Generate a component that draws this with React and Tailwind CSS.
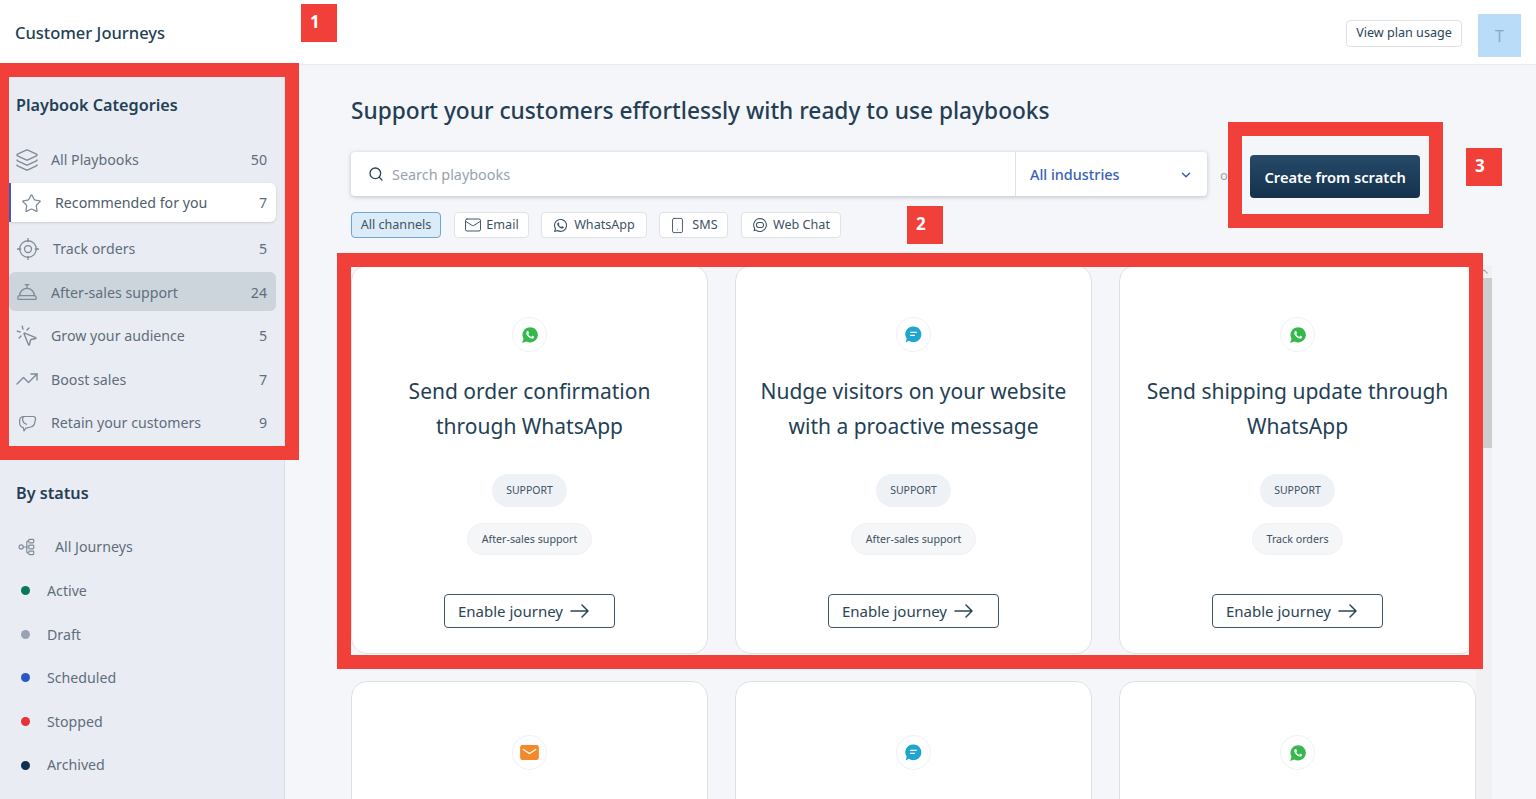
import React from 'react';
import { Layers, Star, ConciergeBell, MousePointerClick, TrendingUp, Search, ChevronDown, ChevronUp, Mail, Smartphone } from 'lucide-react';
import { IoLogoWhatsapp } from 'react-icons/io';
import { FaWhatsapp } from 'react-icons/fa';

const TargetIcon = (props) => (
  <svg viewBox="0 0 24 24" fill="none" stroke="currentColor" strokeWidth="1.5" {...props}>
    <circle cx="12" cy="12" r="9" />
    <circle cx="12" cy="12" r="3.8" />
    <path d="M12 0v4.500M12 19.500V24M0 12h4.500M19.500 12H24" />
  </svg>
);

const BubblesIcon = (props) => (
  <svg viewBox="0 0 24 24" fill="none" stroke="currentColor" strokeWidth="1.5" strokeLinejoin="round" {...props}>
    <path d="M8 4h10.500c2 0 3 1.200 2.600 3.200l-1 4.600c-.5 2.400-2 3.700-4.300 4.200l-5.600 1.200-2.200 3.300-.8-3.700C4.300 16 3 14 3 11.500V9c0-3 2-5 5-5z" />
    <path d="M8 4c-1.500 1-2 2.500-1.500 4.500.6 2.500 2.500 4 5 4.500" />
  </svg>
);

const FlowIcon = (props) => (
  <svg viewBox="0 0 20 20" fill="none" stroke="currentColor" strokeWidth="1.3" {...props}>
    <circle cx="3.500" cy="10" r="2.300" />
    <path d="M5.800 10h4M9.800 3.500v13M9.800 3.500h2M9.800 10h2M9.800 16.500h2" />
    <rect x="12" y="1.500" width="5.500" height="4" rx="1" />
    <rect x="12" y="8" width="5.500" height="4" rx="1" />
    <rect x="12" y="14.500" width="5.500" height="4" rx="1" />
  </svg>
);

const WebChatIcon = (props) => (
  <svg viewBox="0 0 20 20" fill="none" stroke="currentColor" strokeWidth="1.300" {...props}>
    <path d="M10 2a8 8 0 1 1-5 14.300L2.700 17l.6-2.800A8 8 0 0 1 10 2z" />
    <rect x="5.500" y="7" width="9" height="6" rx="3" />
  </svg>
);

const LongArrow = () => (
  <svg viewBox="0 0 19 14" fill="none" stroke="currentColor" strokeWidth="1.500" strokeLinecap="round" strokeLinejoin="round" className="w-[19px] h-[14px]">
    <path d="M1 7h17M12 1l6 6-6 6" />
  </svg>
);

const ChatBadge = () => (
  <svg viewBox="0 0 20 20" className="w-[19px] h-[19px]">
    <path d="M10 1.500a8.300 8.300 0 1 1-4.800 15.100L1.800 18.500l1-4A8.300 8.300 0 0 1 10 1.500z" fill="#1fa5cf" />
    <path d="M6.500 7.800h7M6.500 11h5" stroke="#fff" strokeWidth="1.400" />
  </svg>
);

const MailBadge = () => (
  <svg viewBox="0 0 20 16" className="w-[19px] h-[15px]">
    <rect width="20" height="16" rx="2.500" fill="#f28a2c" />
    <path d="M3 4.500l7 4.500 7-4.500" fill="none" stroke="#fff" strokeWidth="1.400" />
  </svg>
);

const WhatsappBadge = () => <IoLogoWhatsapp className="w-[18px] h-[18px] text-[#36b94c]" />;

const categories = [
  { label: 'All Playbooks', count: 50, Icon: Layers, row: 'pl-[6px]', icon: 'w-[24px] h-[24px]', text: 'ml-[12px]' },
  { label: 'Recommended for you', count: 7, Icon: Star, row: '-mt-[1px] pt-[2px] pl-[10px] bg-white rounded-r-md border-l-2 border-[#3a5fb8] shadow-sm', icon: 'w-[21px] h-[21px]', text: 'ml-[13px] text-[#4d5d6b]' },
  { label: 'Track orders', count: 5, Icon: TargetIcon, row: 'mt-[2px] pt-[2px] pl-[8px]', icon: 'w-[22px] h-[22px]', text: 'ml-[14px]' },
  { label: 'After-sales support', count: 24, Icon: ConciergeBell, row: 'pt-[2px] pl-[7px] bg-[#cdd5dc] rounded-md', icon: 'w-[22px] h-[22px]', text: 'ml-[13px]' },
  { label: 'Grow your audience', count: 5, Icon: MousePointerClick, row: 'pt-[2px] pl-[6px]', icon: 'w-[24px] h-[24px]', text: 'ml-[12px]' },
  { label: 'Boost sales', count: 7, Icon: TrendingUp, row: 'pt-[2px] pl-[6px]', icon: 'w-[24px] h-[24px]', text: 'ml-[12px]' },
  { label: 'Retain your customers', count: 9, Icon: BubblesIcon, row: 'pt-[2px] pl-[8px]', icon: 'w-[21px] h-[21px]', text: 'ml-[13px]' },
];

const statuses = [
  { label: 'Active', dot: 'bg-[#06795a]' },
  { label: 'Draft', dot: 'bg-[#98a4b3]' },
  { label: 'Scheduled', dot: 'bg-[#2b55c4]' },
  { label: 'Stopped', dot: 'bg-[#e5323d]' },
  { label: 'Archived', dot: 'bg-[#10304d]' },
];

const cards = [
  { title: ['Send order confirmation', 'through WhatsApp'], tag: 'After-sales support', Badge: WhatsappBadge, pad: 'pt-[51px]' },
  { title: ['Nudge visitors on your website', 'with a proactive message'], tag: 'After-sales support', Badge: ChatBadge, pad: 'pt-[51px]' },
  { title: ['Send shipping update through', 'WhatsApp'], tag: 'Track orders', Badge: WhatsappBadge, pad: 'pt-[51px]' },
  { title: ['Send order follow up', 'through email'], tag: 'After-sales support', Badge: MailBadge, pad: 'pt-[53px]' },
  { title: ['Answer common questions', 'with web chat'], tag: 'After-sales support', Badge: ChatBadge, pad: 'pt-[53px]' },
  { title: ['Send delivery update', 'through WhatsApp'], tag: 'Track orders', Badge: WhatsappBadge, pad: 'pt-[53px]' },
];

function Card({ card }) {
  const { title, tag, Badge, pad } = card;
  return (
    <div className={`h-[389px] bg-white border border-[#dde1e6] rounded-2xl flex flex-col items-center shrink-0 ${pad}`}>
      <div className="w-[35px] h-[35px] rounded-full border border-[#eef0f3] flex items-center justify-center">
        <Badge />
      </div>
      <h3 className="mt-[22px] text-[21px] leading-[35px] text-[#243f55] text-center whitespace-nowrap">
        {title[0]}<br />{title[1]}
      </h3>
      <span className="mt-[30px] h-[33px] px-[14.500px] flex items-center rounded-full bg-[#eef1f5] text-[10.500px] text-[#3d5264]">SUPPORT</span>
      <span className="mt-[16px] h-[32px] px-[13.500px] flex items-center rounded-full bg-[#f5f6f8] border border-[#eff1f4] text-[10.700px] text-[#3d5264]">{tag}</span>
      <button className="mt-[39px] w-[171px] h-[34px] pl-[13px] flex items-center gap-[7px] border border-[#3f5668] rounded text-[15px] text-[#2b4458]">
        Enable journey
        <LongArrow />
      </button>
    </div>
  );
}

function RedBox({ className }) {
  return <div className={`absolute border-[#f1403a] ${className}`} />;
}

function Tag({ n, className }) {
  return (
    <div className={`absolute w-[36px] h-[38px] bg-[#f1403a] text-white font-bold text-[17px] pt-[6px] pl-[9px] leading-[24px] ${className}`}>{n}</div>
  );
}

export default function App() {
  return (
    <div className="relative h-screen overflow-hidden flex flex-col bg-[#f5f6f9] text-[#243f55] font-['Noto_Sans',sans-serif]">
      {/* top bar */}
      <header className="h-[65px] shrink-0 bg-white border-b border-[#e9ebee] flex items-center pl-[15px] pr-[15px]">
        <span className="mt-[2px] text-[16.500px] font-medium">Customer Journeys</span>
        <button className="ml-auto mt-[2px] h-[27px] w-[116px] border border-[#dfe3e7] rounded text-[12.600px] text-[#2b4458]">View plan usage</button>
        <div className="ml-[16px] mt-[7px] w-[43px] h-[43px] bg-[#b9dcf8] flex items-center justify-center text-[#8ba9c4] text-[16px]">T</div>
      </header>

      <div className="flex flex-1 min-h-0">
        {/* sidebar */}
        <aside className="w-[285px] shrink-0 bg-[#e9edf3] border-r border-[#d9dee4] pl-[9px] pr-[8px] overflow-hidden">
          <h2 className="mt-[28px] pl-[7px] text-[16.200px] leading-[24px] font-semibold">Playbook Categories</h2>
          <div className="mt-[23px] flex flex-col gap-[4.600px]">
            {categories.map((c) => (
              <div key={c.label} className={`h-[39px] flex items-center pr-[9px] text-[14.200px] text-[#5f6e7c] ${c.row}`}>
                <c.Icon className={`shrink-0 text-[#7d8b98] ${c.icon}`} strokeWidth={1.400} />
                <span className={c.text}>{c.label}</span>
                <span className="ml-auto">{c.count}</span>
              </div>
            ))}
          </div>
          <h2 className="mt-[39px] pl-[7px] text-[16.200px] leading-[24px] font-semibold">By status</h2>
          <div className="mt-[23px] flex flex-col gap-[4.600px]">
            <div className="h-[39px] flex items-center pl-[9px] text-[14.200px] text-[#5f6e7c]">
              <FlowIcon className="w-[18px] h-[18px] text-[#7d8b98]" />
              <span className="ml-[19px]">All Journeys</span>
            </div>
            {statuses.map((s) => (
              <div key={s.label} className="h-[39px] flex items-center pl-[12px] text-[14.200px] text-[#5f6e7c]">
                <span className={`w-[9px] h-[9px] rounded-full ${s.dot}`} />
                <span className="ml-[17px]">{s.label}</span>
              </div>
            ))}
          </div>
        </aside>

        {/* main */}
        <main className="flex-1 min-w-0 flex flex-col pl-[66px]">
          <h1 className="mt-[28px] text-[22.700px] leading-[36px] font-medium whitespace-nowrap">Support your customers effortlessly with ready to use playbooks</h1>
          <div className="mt-[23px] flex items-start">
            <div className="w-[856px] h-[44px] bg-white rounded shadow-[0_1px_4px_rgba(40,50,70,0.28)] flex items-center">
              <Search className="ml-[17px] w-[16px] h-[16px] text-[#2b4458]" strokeWidth={2} />
              <span className="ml-[8px] flex-1 pt-[1px] text-[14.400px] text-[#98a3ad]">Search playbooks</span>
              <div className="w-[192px] h-full border-l border-[#dfe3e7] flex items-center pl-[14px] pr-[14px] pt-[1px] text-[14.400px] font-medium text-[#3a5fb8]">
                All industries
                <ChevronDown className="ml-auto w-[14px] h-[14px]" strokeWidth={2.500} />
              </div>
            </div>
            <span className="ml-[13px] mt-[14px] text-[13px] text-[#98a3ad]">or</span>
            <button className="ml-[17px] mt-[3px] w-[170px] h-[43px] pt-[1px] rounded bg-gradient-to-b from-[#264a6a] to-[#15324c] text-white text-[14.700px] font-semibold">Create from scratch</button>
          </div>
          <div className="mt-[14px] flex gap-[12px] text-[12.600px] text-[#3d5264]">
            <span className="h-[26px] w-[90px] mr-[1px] flex items-center justify-center rounded bg-[#dcebf8] border border-[#6ea5d8]">All channels</span>
            <span className="h-[26px] w-[75px] flex items-center justify-center gap-[4px] rounded bg-white border border-[#dfe3e7]">
              <Mail className="w-[18px] h-[18px]" strokeWidth={1.300} />Email
            </span>
            <span className="h-[26px] w-[106px] flex items-center justify-center gap-[6px] rounded bg-white border border-[#dfe3e7]">
              <FaWhatsapp className="w-[15px] h-[15px]" />WhatsApp
            </span>
            <span className="h-[26px] w-[69px] mr-[1px] flex items-center justify-center gap-[6px] rounded bg-white border border-[#dfe3e7]">
              <Smartphone className="w-[17px] h-[17px]" strokeWidth={1.300} />SMS
            </span>
            <span className="h-[26px] w-[100px] flex items-center justify-center gap-[5px] rounded bg-white border border-[#dfe3e7]">
              <WebChatIcon className="w-[16px] h-[16px]" />Web Chat
            </span>
          </div>
          <div className="mt-[27px] flex-1 min-h-0 flex overflow-hidden">
            <div className="w-[1125px] shrink-0 grid grid-cols-3 gap-[27px] content-start">
              {cards.map((card, i) => <Card key={i} card={card} />)}
            </div>
            <div className="w-[16px] bg-[#f1f1f3] flex flex-col">
              <ChevronUp className="w-[16px] h-[13px] shrink-0 text-[#a0a0a0]" />
              <div className="w-full h-[170px] bg-[#cdcdcd]" />
            </div>
          </div>
        </main>
      </div>

      {/* annotation overlays */}
      <RedBox className="left-0 top-[63px] w-[299px] h-[397px] border-t-[14px] border-b-[14px] border-l-[9px] border-r-[14px]" />
      <RedBox className="left-[337px] top-[253px] w-[1146px] h-[416px] border-[14px]" />
      <RedBox className="left-[1228px] top-[122px] w-[215px] h-[106px] border-[14px]" />
      <Tag n="1" className="left-[301px] top-[4px]" />
      <Tag n="2" className="left-[907px] top-[206px]" />
      <Tag n="3" className="left-[1466px] top-[148px]" />
    </div>
  );
}
